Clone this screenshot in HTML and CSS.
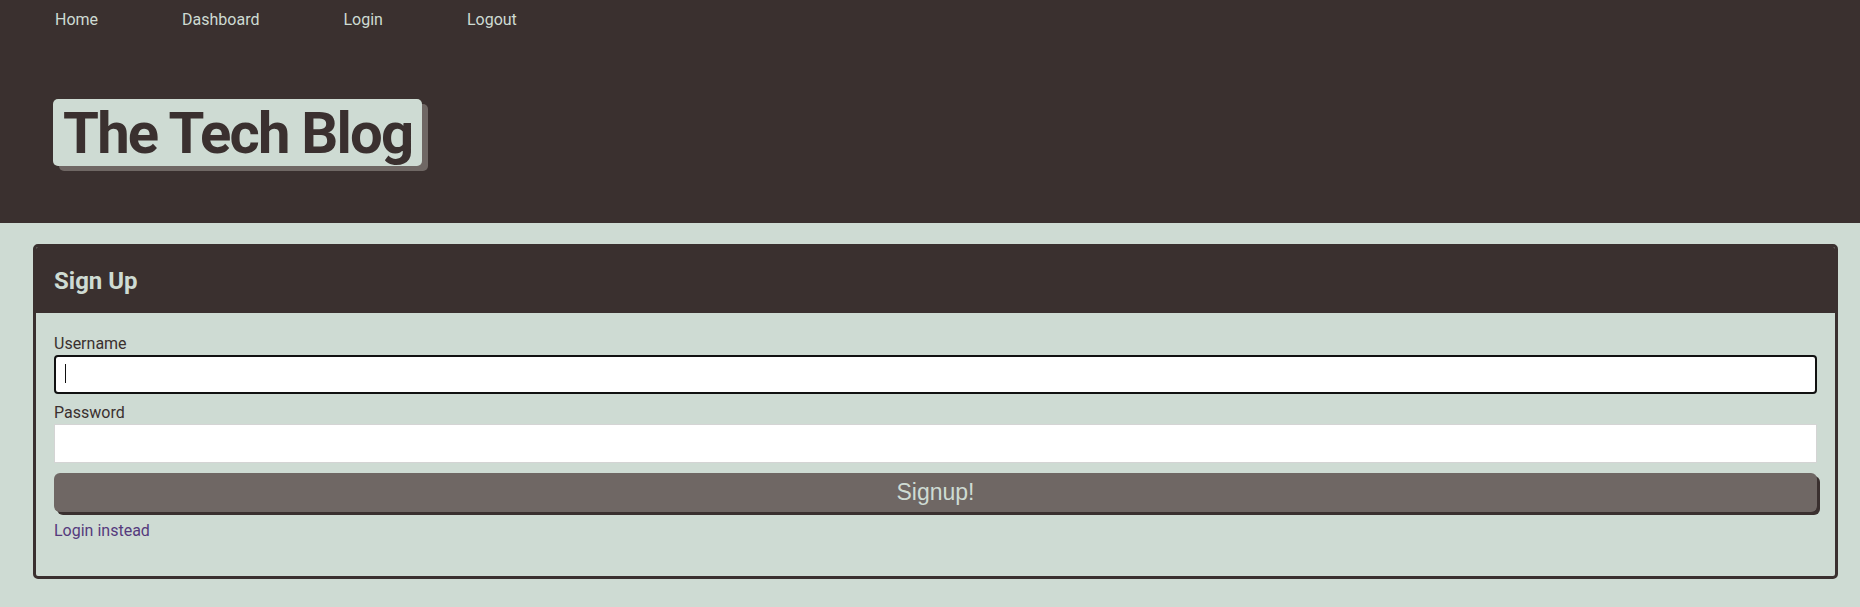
FILE: index.html
```html
<!DOCTYPE html>
<html lang="en">
<head>
<meta charset="utf-8">
<title>The Tech Blog - Sign Up</title>
<link rel="stylesheet" href="styles.css">
</head>
<body>
<header class="site-header">
  <nav class="nav">
    <a class="nav-link" href="#">Home</a>
    <a class="nav-link" href="#">Dashboard</a>
    <a class="nav-link" href="#">Login</a>
    <a class="nav-link" href="#">Logout</a>
  </nav>
  <div class="brand">
    <h1 class="brand-title">The Tech Blog</h1>
  </div>
</header>
<main class="main">
  <section class="card">
    <div class="card-header">
      <h2 class="card-title">Sign Up</h2>
    </div>
    <form class="card-body">
      <label class="field-label" for="username">Username</label>
      <div class="field">
        <input class="input input-focused" id="username" type="text">
        <span class="caret"></span>
      </div>
      <label class="field-label" for="password">Password</label>
      <div class="field">
        <input class="input" id="password" type="password">
      </div>
      <button class="btn" type="button">Signup!</button>
      <a class="alt-link" href="#">Login instead</a>
    </form>
  </section>
</main>
</body>
</html>
```
FILE: styles.css
```css
* { box-sizing: border-box; }

body {
  margin: 0;
  background: #cedbd3;
  font-family: Roboto, "Noto Sans", sans-serif;
  color: #3a302f;
}

.site-header {
  background: #3a302f;
  height: 223px;
  padding: 8px 0 0 53px;
}

.nav {
  display: flex;
  gap: 84px;
  padding-left: 2px;
}

.nav-link {
  color: #cedbd3;
  text-decoration: none;
  font-size: 16px;
  line-height: 24px;
}

.brand {
  margin-top: 67px;
}

.brand-title {
  display: inline-block;
  margin: 0;
  padding: 5px 10px 4px 10px;
  background: #cedbd3;
  color: #3a302f;
  font-size: 58px;
  line-height: 58px;
  font-weight: 700;
  letter-spacing: -1.8px;
  border-radius: 5px;
  box-shadow: 6px 5px 0 #6f6764;
}

.main {
  padding: 21px 22px 0 33px;
}

.card {
  border: 3px solid #3a302f;
  border-radius: 5px;
  overflow: hidden;
}

.card-header {
  background: #3a302f;
  padding: 16px 18px 14px;
}

.card-title {
  margin: 0;
  color: #cedbd3;
  font-size: 24px;
  line-height: 36px;
  font-weight: 700;
}

.card-body {
  display: flex;
  flex-direction: column;
  padding: 18px 18px 34px;
}

.field-label {
  font-size: 16px;
  line-height: 22px;
  padding-top: 2px;
  color: #3a302f;
}

.field {
  position: relative;
  margin-bottom: 6px;
}

.input {
  display: block;
  width: 100%;
  height: 39px;
  border: 1px solid #d4d4d4;
  background: #fff;
  font-size: 16px;
  padding: 0 10px;
  outline: none;
}

.input-focused {
  border: 2px solid #111;
  border-radius: 4px;
}

.caret {
  position: absolute;
  left: 11px;
  top: 9px;
  width: 1px;
  height: 19px;
  background: #111;
}

.btn {
  margin-top: 4px;
  margin-bottom: 6px;
  height: 39px;
  width: 100%;
  border: none;
  border-radius: 6px;
  background: #6f6764;
  color: #cedbd3;
  font-family: "Liberation Sans", Arial, sans-serif;
  font-size: 23px;
  box-shadow: 3px 3px 0 #3a302f;
  cursor: pointer;
}

.alt-link {
  align-self: flex-start;
  color: #553a7d;
  text-decoration: none;
  font-size: 16px;
  line-height: 22px;
  padding-top: 2px;
}
```
